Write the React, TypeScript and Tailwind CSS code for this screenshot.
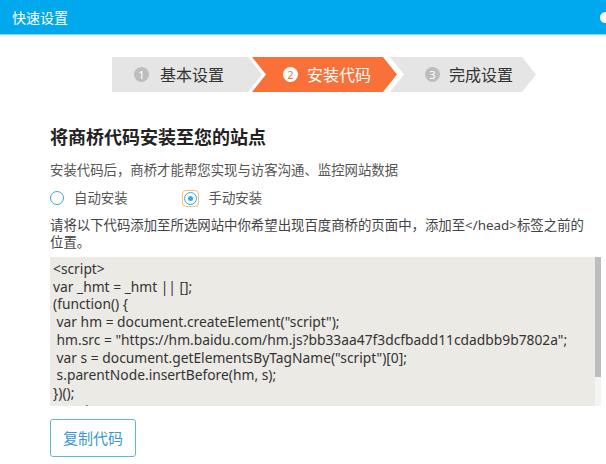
const steps = [
  { n: 1, label: '基本设置' },
  { n: 2, label: '安装代码' },
  { n: 3, label: '完成设置' },
];

const codeLines = [
  '<script>',
  'var _hmt = _hmt || [];',
  '(function() {',
  ' var hm = document.createElement("script");',
  ' hm.src = "https://hm.baidu.com/hm.js?bb33aa47f3dcfbadd11cdadbb9b7802a";',
  ' var s = document.getElementsByTagName("script")[0];',
  ' s.parentNode.insertBefore(hm, s);',
  '})();',
  '</script>',
];

const StepBar = () => (
  <div className="mt-[22px] flex h-[35px] pl-[112px]">
    {/* step 1 */}
    <div className="flex w-[150px] items-center bg-[#e5e5e5] pl-[22px] [clip-path:polygon(0_0,calc(100%-14px)_0,100%_50%,calc(100%-14px)_100%,0_100%)]">
      <span className="flex h-[15px] w-[15px] items-center justify-center rounded-full bg-[#bdbdbd] text-[11px] leading-none text-white">1</span>
      <span className="ml-[11px] text-[16px] text-[#333]">{steps[0].label}</span>
    </div>
    {/* step 2 */}
    <div className="-ml-[10px] flex w-[145px] items-center bg-[#f97138] pl-[31px] [clip-path:polygon(0_0,calc(100%-14px)_0,100%_50%,calc(100%-14px)_100%,0_100%,14px_50%)]">
      <span className="flex h-[15px] w-[15px] items-center justify-center rounded-full bg-white text-[11px] leading-none text-[#f97138]">2</span>
      <span className="ml-[9px] text-[16px] text-white">{steps[1].label}</span>
    </div>
    {/* step 3 */}
    <div className="-ml-[7px] flex w-[146px] items-center bg-[#e5e5e5] pl-[35px] [clip-path:polygon(0_0,calc(100%-14px)_0,100%_50%,calc(100%-14px)_100%,0_100%,14px_50%)]">
      <span className="flex h-[15px] w-[15px] items-center justify-center rounded-full bg-[#bdbdbd] text-[11px] leading-none text-white">3</span>
      <span className="ml-[9px] text-[16px] text-[#333]">{steps[2].label}</span>
    </div>
  </div>
);

export default function App() {
  return (
    <div className="relative h-[464px] w-[606px] overflow-hidden bg-white font-['Noto_Sans','Noto_Sans_CJK_SC',sans-serif]">
      {/* header */}
      <div className="flex h-[35px] items-center justify-between border-b border-[#8fd6f5] bg-[#00a9ee] pl-3 text-[14px] text-white">
        <span>快速设置</span>
        <span className="-mr-[5px] h-[11px] w-[11px] rounded-full bg-white" />
      </div>

      <StepBar />

      <div className="pl-[50px] pr-[5px]">
        <h2 className="mt-[33px] text-[18px] font-bold leading-[24px] text-[#222]">将商桥代码安装至您的站点</h2>
        <p className="mt-[11px] text-[13.4px] leading-[20px] text-[#555]">安装代码后，商桥才能帮您实现与访客沟通、监控网站数据</p>

        <div className="mt-[8px] flex h-[20px] items-center text-[13.4px] text-[#555]">
          <span className="h-[14px] w-[14px] rounded-full border-[1.5px] border-[#3aa8dc] bg-white" />
          <span className="ml-[10px]">自动安装</span>
          <span className="ml-[54px] flex h-[17px] w-[17px] items-center justify-center rounded-[4px] border border-[#f0c27a]">
            <span className="flex h-[13px] w-[13px] items-center justify-center rounded-full border-[1.5px] border-[#3aa8dc] bg-white">
              <span className="h-[5px] w-[5px] rounded-full bg-[#3aa8dc]" />
            </span>
          </span>
          <span className="ml-[10px]">手动安装</span>
        </div>

        <p className="mt-[9px] max-w-[544px] text-[13.4px] leading-[17px] text-[#444]">
          请将以下代码添加至所选网站中你希望出现百度商桥的页面中，添加至&lt;/head&gt;标签之前的位置。
        </p>

        <div className="mt-[6px] flex h-[149px] w-[551px]">
          <div className="flex-1 overflow-hidden bg-[#ebeae5] pl-[3px] pt-[3px]">
            <pre className="font-['Noto_Sans',sans-serif] text-[13.8px] leading-[17.7px] whitespace-pre text-[#333]">
              {codeLines.join('\n')}
            </pre>
          </div>
          <div className="flex w-[6px] flex-col bg-[#f4f4f4]">
            <div className="h-[120px] bg-[#bdbdbd]" />
          </div>
        </div>

        <button className="mt-[13px] h-[38px] w-[86px] rounded-[3px] border border-[#5cbad8] bg-white text-[15px] text-[#3a98d3]">
          复制代码
        </button>
      </div>
    </div>
  );
}
